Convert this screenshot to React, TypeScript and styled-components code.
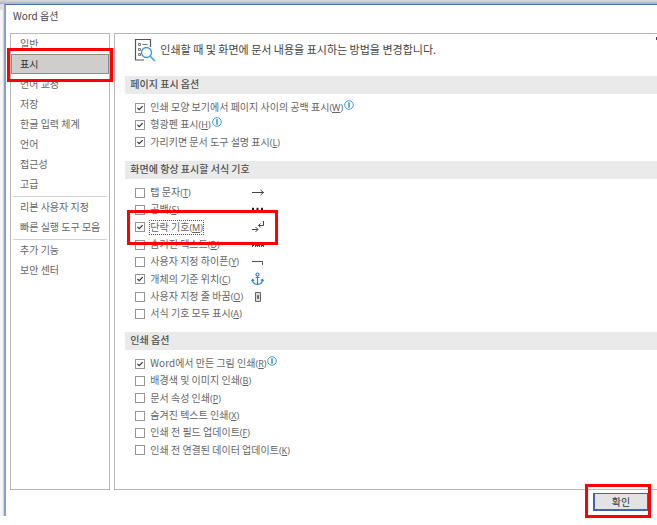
import React, { useState } from 'react';
import styled, { createGlobalStyle, css } from 'styled-components';

const GlobalStyle = createGlobalStyle`
  * { box-sizing: border-box; }
  body {
    margin: 0;
    background: #fff;
    color: #505050;
    font-family: 'Noto Sans CJK KR', 'Noto Sans', sans-serif;
    font-size: 10px;
    line-height: 16px;
    overflow: hidden;
  }
`;

const Desktop = styled.div`
  display: flex;
  min-height: 100vh;
  padding: 4px 0 9px 4px;
  background:
    linear-gradient(#dcdcdc, #a9adb5) 0 0 / 100% 4px no-repeat,
    linear-gradient(#dedede, #dedede) 0 0 / 4px 10px no-repeat,
    linear-gradient(90deg, #f6f6f6 60%, #c3c8d0) 0 10px / 4px calc(100% - 19px) no-repeat,
    #fff;
`;

const Dialog = styled.div`
  flex: 1;
  min-width: 0;
  display: flex;
  flex-direction: column;
  border-top: 1px solid #4a72ad;
  border-left: 2px solid #8c9fc8;
  background: #fff;
`;

const TitleBar = styled.h1`
  margin: 0;
  padding: 3px 7px 9px;
  font-size: 10px;
  font-weight: 400;
  line-height: 16px;
  color: #444;
`;

const Body = styled.div`
  flex: 1;
  display: flex;
  gap: 4px;
  padding-left: 4px;
`;

const Sidebar = styled.nav`
  flex: 0 0 99px;
  border: 1px solid #b9b9b9;
`;

const Divider = styled.hr`
  margin: 2px 2px 0;
  border: 0;
  border-top: 1px solid #d2d2d2;
`;

const callout = css`
  position: relative;
  &::after {
    content: '';
    position: absolute;
    z-index: 2;
    border: 3px solid #ff0000;
    pointer-events: none;
  }
`;

const NavItem = styled.button<{ $active: boolean; $marked: boolean }>`
  display: block;
  width: 100%;
  height: 20px;
  padding: 0 8px;
  border: 1px solid ${p => (p.$active ? '#8c8c8c' : 'transparent')};
  background: ${p => (p.$active ? '#d0cecd' : 'transparent')};
  color: ${p => (p.$active ? '#333' : '#666')};
  font: inherit;
  line-height: 18px;
  text-align: left;
  white-space: nowrap;
  ${p => p.$marked && callout}
  &::after { inset: -7px -5px -9px; }
`;

const Panel = styled.main`
  flex: 1;
  min-width: 0;
  border: 1px solid #b9b9b9;
  border-right: 0;
  padding-left: 10px;
`;

const Intro = styled.header`
  position: relative;
  display: flex;
  align-items: center;
  gap: 4px;
  height: 42px;
  padding: 4px 0 14px 9px;
  font-size: 11px;
  color: #444;
`;

const IntroText = styled.p`
  margin: 0;
  padding-bottom: 2px;
`;

const ScrollHint = styled.span`
  position: absolute;
  top: 3px;
  right: 0;
  width: 1px;
  height: 3px;
  background: #5a2d78;
`;

const SectionTitle = styled.h2`
  margin: 0;
  height: 18px;
  padding-left: 5px;
  background: #eaeaea;
  color: #505050;
  font-size: 10px;
  font-weight: 500;
  line-height: 16px;
`;

const OptionList = styled.div`
  padding: 5px 0 10px 10px;
`;

const OptionRow = styled.div<{ $marked: boolean }>`
  display: grid;
  grid-template-columns: 116px auto;
  justify-content: start;
  width: 142px;
  height: 17px;
  align-items: center;
  color: #666;
  &:nth-child(3n) { height: 18px; }
  ${p => p.$marked && callout}
  &::after { inset: -8px -1px -9px -8px; }
`;

const OptionText = styled.div`
  display: flex;
  align-items: center;
  white-space: nowrap;
`;

const Check = styled.input`
  appearance: none;
  flex: none;
  width: 10px;
  height: 10px;
  margin: 0 4px 0 0;
  border: 1px solid #969696;
  background: #fff center / 8px 8px no-repeat;
  &:checked {
    background-image: url("data:image/svg+xml,%3Csvg xmlns='http://www.w3.org/2000/svg' viewBox='0 0 8 8'%3E%3Cpath d='M1.4 3.8 3.2 5.6 6.7 2.1' fill='none' stroke='%23333' stroke-width='1.2'/%3E%3C/svg%3E");
  }
`;

const Label = styled.label<{ $focused: boolean }>`
  padding: 0 1px;
  line-height: 14px;
  height: 15px;
  outline: ${p => (p.$focused ? '1px dotted #555' : 'none')};
  outline-offset: -1px;
`;

const Key = styled.span`
  font-family: 'Noto Sans', 'Open Sans', sans-serif;
  font-size: 9px;
`;

const Footer = styled.footer`
  display: flex;
  justify-content: flex-end;
  padding: 3px 8px 5px;
`;

const ConfirmSlot = styled.div`
  ${callout}
  &::after { inset: -9px -2px -7px -8px; }
`;

const ConfirmButton = styled.button`
  display: block;
  width: 56px;
  height: 18px;
  padding: 0;
  border: 2px solid #3f66a3;
  border-top-width: 1px;
  background: #e3e3e3;
  color: #333;
  font: inherit;
  line-height: 14px;
`;

const InfoMark = styled.svg`
  flex: none;
  align-self: flex-start;
`;

const InfoIcon = () => (
  <InfoMark width="10" height="10" viewBox="0 0 10 10" aria-hidden="true">
    <circle cx="5" cy="5" r="4.3" fill="none" stroke="#3a9bd6" strokeWidth="1" />
    <path d="M5 2.3v5.4" stroke="#2b86c4" strokeWidth="1.4" />
  </InfoMark>
);

const PageSearchIcon = () => (
  <svg width="22" height="24" viewBox="0 0 22 24" fill="none" aria-hidden="true">
    <path d="M16.5 9V1.5H1.5v20.500H10" stroke="#555" strokeWidth="1.2" />
    <path d="M4.5 5.500h2v2h-2zM4.5 10.500h2v2h-2zM4.500 15.500h2v2h-2z" stroke="#777" strokeWidth="1" />
    <path d="M8.500 6.500h5" stroke="#777" strokeWidth="1" />
    <circle cx="12.500" cy="14.500" r="5" fill="#fff" stroke="#3a9bd6" strokeWidth="1.3" />
    <path d="m16 18 5 5" stroke="#3a9bd6" strokeWidth="1.5" />
  </svg>
);

type GlyphName = 'tab' | 'space' | 'paragraph' | 'hidden' | 'hyphen' | 'anchor' | 'break';

const glyphs: Record<GlyphName, React.ReactNode> = {
  tab: <path d="M1 6.500h11.500M9.500 4l3 2.500-3 2.500" stroke="#444" />,
  space: <path d="M1 6h2M5.500 6h2M10 6h2" stroke="#222" strokeWidth="2.500" />,
  paragraph: (
    <g stroke="#444">
      <path d="M12.500 1v4.500H7.500M9.500 3.500l-2 2 2 2" />
      <path d="M1 9.500h6M4.500 7l2.500 2.500L4.500 12" />
    </g>
  ),
  hidden: (
    <g stroke="#444">
      <path d="M1.500 9V5h3v4M6.500 9V4.500M6.500 5.500h2V9M10.500 9V4M12.500 9V5h-2" />
      <path d="M1 7.500h12" strokeDasharray="2 1" />
    </g>
  ),
  hyphen: <path d="M1 6.500h10.500V10" stroke="#555" />,
  anchor: (
    <g stroke="#2b86c4" strokeWidth="1.200">
      <circle cx="6.500" cy="2.500" r="1.500" />
      <path d="M6.500 4v8.500M4.500 5.500h4M1.500 7.500C1.500 11 4 12.300 6.500 12.500c2.500-.2 5-1.500 5-5M.500 9.300l1-2 1.700 1.200M12.500 9.300l-1-2-1.700 1.200" />
    </g>
  ),
  break: (
    <g stroke="#666">
      <path d="M4.500 2.500h5v9h-5z" fill="#ddd" />
      <path d="M6.500 5.500h1v3h-1z" />
    </g>
  ),
};

const Glyph = ({ name }: { name: GlyphName }) => (
  <svg width="14" height="14" viewBox="0 0 14 14" fill="none" aria-hidden="true">
    {glyphs[name]}
  </svg>
);

interface Option {
  text: string;
  hotkey: string;
  checked?: boolean;
  info?: boolean;
  glyph?: GlyphName;
  marked?: boolean;
}

const sections: { title: string; options: Option[] }[] = [
  {
    title: '페이지 표시 옵션',
    options: [
      { text: '인쇄 모양 보기에서 페이지 사이의 공백 표시', hotkey: 'W', checked: true, info: true },
      { text: '형광펜 표시', hotkey: 'H', checked: true, info: true },
      { text: '가리키면 문서 도구 설명 표시', hotkey: 'L', checked: true },
    ],
  },
  {
    title: '화면에 항상 표시할 서식 기호',
    options: [
      { text: '탭 문자', hotkey: 'T', glyph: 'tab' },
      { text: '공백', hotkey: 'S', glyph: 'space' },
      { text: '단락 기호', hotkey: 'M', checked: true, glyph: 'paragraph', marked: true },
      { text: '숨겨진 텍스트', hotkey: 'D', glyph: 'hidden' },
      { text: '사용자 지정 하이픈', hotkey: 'Y', glyph: 'hyphen' },
      { text: '개체의 기준 위치', hotkey: 'C', checked: true, glyph: 'anchor' },
      { text: '사용자 지정 줄 바꿈', hotkey: 'O', glyph: 'break' },
      { text: '서식 기호 모두 표시', hotkey: 'A' },
    ],
  },
  {
    title: '인쇄 옵션',
    options: [
      { text: 'Word에서 만든 그림 인쇄', hotkey: 'R', checked: true, info: true },
      { text: '배경색 및 이미지 인쇄', hotkey: 'B' },
      { text: '문서 속성 인쇄', hotkey: 'P' },
      { text: '숨겨진 텍스트 인쇄', hotkey: 'X' },
      { text: '인쇄 전 필드 업데이트', hotkey: 'F' },
      { text: '인쇄 전 연결된 데이터 업데이트', hotkey: 'K' },
    ],
  },
];

const navGroups = [
  ['일반', '표시', '언어 교정', '저장', '한글 입력 체계', '언어', '접근성', '고급'],
  ['리본 사용자 지정', '빠른 실행 도구 모음'],
  ['추가 기능', '보안 센터'],
];

const OptionItem = ({ option }: { option: Option }) => {
  const id = `option-${option.hotkey}`;
  return (
    <OptionRow $marked={!!option.marked}>
      <OptionText>
        <Check type="checkbox" id={id} defaultChecked={option.checked} />
        <Label htmlFor={id} $focused={!!option.marked}>
          {option.text}
          <Key>(<u>{option.hotkey}</u>)</Key>
        </Label>
        {option.info && <InfoIcon />}
      </OptionText>
      {option.glyph && <Glyph name={option.glyph} />}
    </OptionRow>
  );
};

export default function App() {
  const [page, setPage] = useState('표시');
  return (
    <>
      <GlobalStyle />
      <Desktop>
        <Dialog role="dialog" aria-labelledby="dialog-title">
          <TitleBar id="dialog-title">Word 옵션</TitleBar>
          <Body>
            <Sidebar>
              {navGroups.map((group, index) => (
                <React.Fragment key={group[0]}>
                  {index > 0 && <Divider />}
                  {group.map(name => (
                    <NavItem
                      key={name}
                      type="button"
                      $active={name === page}
                      $marked={name === '표시'}
                      onClick={() => setPage(name)}
                    >
                      {name}
                    </NavItem>
                  ))}
                </React.Fragment>
              ))}
            </Sidebar>
            <Panel>
              <Intro>
                <PageSearchIcon />
                <IntroText>인쇄할 때 및 화면에 문서 내용을 표시하는 방법을 변경합니다.</IntroText>
                <ScrollHint />
              </Intro>
              {sections.map(section => (
                <section key={section.title}>
                  <SectionTitle>{section.title}</SectionTitle>
                  <OptionList>
                    {section.options.map(option => (
                      <OptionItem key={option.hotkey} option={option} />
                    ))}
                  </OptionList>
                </section>
              ))}
            </Panel>
          </Body>
          <Footer>
            <ConfirmSlot>
              <ConfirmButton type="button">확인</ConfirmButton>
            </ConfirmSlot>
          </Footer>
        </Dialog>
      </Desktop>
    </>
  );
}
